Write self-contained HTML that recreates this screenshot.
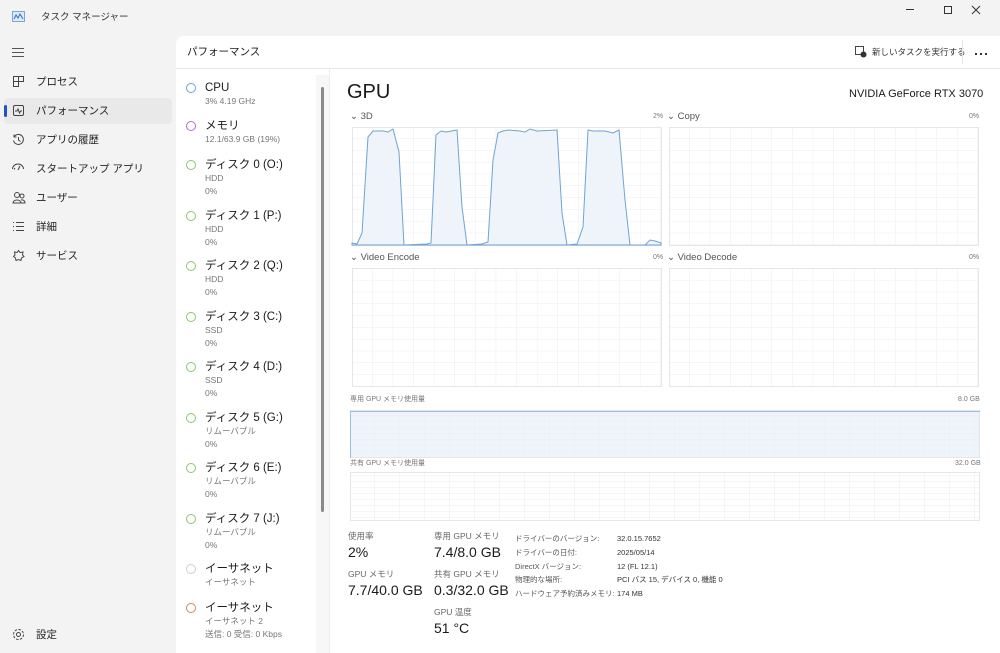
<!DOCTYPE html>
<html><head><meta charset="utf-8"><style>
*{margin:0;padding:0;box-sizing:border-box}
body{width:1000px;height:653px;background:#f3f3f3;font-family:"Liberation Sans","Noto Sans CJK JP",sans-serif;color:#1a1a1a;position:relative;overflow:hidden}
.a{position:absolute;white-space:nowrap;line-height:1.2}
.nav{font-size:10.5px;color:#222}
.it .t{font-size:11.5px;color:#1a1a1a;line-height:14px}
.it .s{font-size:8.5px;color:#777;line-height:12.5px}
.dot{position:absolute;width:10px;height:10px;border-radius:50%;border:1.3px solid}
.lbl{font-size:9.5px;color:#555}
.pc{font-size:7px;color:#777}
.st{font-size:8.5px;color:#666}
.sv{font-size:14px;color:#1a1a1a}
.dl{font-size:7.5px;color:#555}
</style></head><body>
<svg class="a" style="left:12px;top:11px" width="13" height="11"><rect x="0.5" y="0.5" width="12" height="10" fill="#dde9f7" stroke="#7aa7d9"/><path d="M2 8 L4 4 L6 7 L8 3 L11 8" stroke="#2b6fc2" fill="none"/></svg>
<div class="a" style="left:41px;top:12px;font-size:9.5px;color:#333">タスク マネージャー</div>
<div class="a" style="left:906px;top:9px;width:8px;height:1px;background:#333"></div>
<div class="a" style="left:944px;top:6px;width:8px;height:8px;border:1px solid #333"></div>
<svg class="a" style="left:971px;top:5px" width="10" height="10"><path d="M1 1L9 9M9 1L1 9" stroke="#333"/></svg>
<div class="a" style="left:12px;top:48px;width:12px;height:9px;border-top:1px solid #555;border-bottom:1px solid #555"><div style="margin-top:3px;border-top:1px solid #555"></div></div>
<div class="a" style="left:4px;top:98px;width:168px;height:26px;background:#e9e9e9;border-radius:4px"></div>
<div class="a" style="left:4px;top:105px;width:3px;height:12px;background:#1f55c2;border-radius:2px"></div>
<svg class="a" style="left:12px;top:75px" width="13" height="13"><path d="M1.5 1.5H11.5V6.5H6.5V11.5H1.5ZM6.5 1.5V6.5M1.5 6.5H6.5" stroke="#444" fill="none"/></svg>
<div class="a nav" style="left:36px;top:76px">プロセス</div>
<svg class="a" style="left:12px;top:104px" width="13" height="13"><rect x="1.5" y="1.5" width="10" height="10" rx="1.5" stroke="#444" fill="none"/><path d="M3 7H5L6 5L7.5 9L8.5 7H10" stroke="#444" fill="none"/></svg>
<div class="a nav" style="left:36px;top:105px">パフォーマンス</div>
<svg class="a" style="left:12px;top:133px" width="13" height="13"><path d="M2 4A5 5 0 1 1 1.5 7.5M2 1.5V4H4.5M6.5 4V7L8.5 8.5" stroke="#444" fill="none"/></svg>
<div class="a nav" style="left:36px;top:134px">アプリの履歴</div>
<svg class="a" style="left:11px;top:163px" width="14" height="12"><path d="M1.5 6A5.5 5 0 0 1 12.5 6M7 7L9 3M3 6.5L4 5" stroke="#444" fill="none"/></svg>
<div class="a nav" style="left:36px;top:163px">スタートアップ アプリ</div>
<svg class="a" style="left:12px;top:191px" width="14" height="13"><circle cx="5" cy="4" r="2.5" stroke="#444" fill="none"/><circle cx="10" cy="5" r="2" stroke="#444" fill="none"/><path d="M1 12C1 8 9 8 9 12ZM9 9C11 8.5 13 9.5 13 12H9" stroke="#444" fill="none"/></svg>
<div class="a nav" style="left:36px;top:192px">ユーザー</div>
<svg class="a" style="left:12px;top:221px" width="13" height="11"><path d="M1 1.5H2M4 1.5H12M1 5.5H2M4 5.5H12M1 9.5H2M4 9.5H12" stroke="#444"/></svg>
<div class="a nav" style="left:36px;top:221px">詳細</div>
<svg class="a" style="left:12px;top:249px" width="13" height="13"><path d="M6.5 1.5L8 3.5L11 3L10.5 6L12 7.5L9.5 9L9 11.5L6.5 10.5L4 11.5L3.5 9L1.5 7.5L3 6L2.5 3L5 3.5Z" stroke="#444" fill="none"/></svg>
<div class="a nav" style="left:36px;top:250px">サービス</div>
<svg class="a" style="left:12px;top:628px" width="13" height="13"><circle cx="6.5" cy="6.5" r="2" stroke="#444" fill="none"/><circle cx="6.5" cy="6.5" r="5" stroke="#444" fill="none" stroke-dasharray="2.5 1.4"/></svg>
<div class="a nav" style="left:36px;top:629px">設定</div>
<div class="a" style="left:176px;top:36px;width:824px;height:617px;background:#fff;border-top-left-radius:8px"></div>
<div class="a" style="left:176px;top:68px;width:824px;height:1px;background:#e8e8e8"></div>
<div class="a" style="left:187px;top:46px;font-size:10.5px;color:#1a1a1a">パフォーマンス</div>
<svg class="a" style="left:855px;top:46px" width="12" height="12"><rect x="0.5" y="0.5" width="8" height="8" stroke="#444" fill="none"/><circle cx="8.5" cy="8.5" r="3" fill="#333"/></svg>
<div class="a" style="left:872px;top:47px;font-size:8.5px;color:#333">新しいタスクを実行する</div>
<div class="a" style="left:962px;top:40px;width:1px;height:24px;background:#e5e5e5"></div>
<div class="a" style="left:975px;top:53px;width:2px;height:2px;background:#333;box-shadow:5px 0 #333,10px 0 #333"></div>
<div class="a" style="left:316px;top:75px;width:13px;height:578px;background:#f7f7f7"></div>
<div class="a" style="left:321px;top:87px;width:3px;height:425px;background:#8a8a8a;border-radius:2px"></div>
<div class="a" style="left:329px;top:69px;width:1px;height:584px;background:#ececec"></div>
<div class="it">
<div class="dot" style="left:186px;top:83px;border-color:#6aa4d6"></div><div class="a t" style="left:205px;top:81px">CPU</div><div class="a s" style="left:205px;top:95px">3% 4.19 GHz</div>
<div class="dot" style="left:186px;top:121px;border-color:#b76ad0"></div><div class="a t" style="left:205px;top:119px">メモリ</div><div class="a s" style="left:205px;top:133px">12.1/63.9 GB (19%)</div>
<div class="dot" style="left:186px;top:160px;border-color:#8cc66a"></div><div class="a t" style="left:205px;top:158px">ディスク 0 (O:)</div><div class="a s" style="left:205px;top:172px">HDD<br>0%</div>
<div class="dot" style="left:186px;top:211px;border-color:#8cc66a"></div><div class="a t" style="left:205px;top:209px">ディスク 1 (P:)</div><div class="a s" style="left:205px;top:223px">HDD<br>0%</div>
<div class="dot" style="left:186px;top:261px;border-color:#8cc66a"></div><div class="a t" style="left:205px;top:259px">ディスク 2 (Q:)</div><div class="a s" style="left:205px;top:273px">HDD<br>0%</div>
<div class="dot" style="left:186px;top:312px;border-color:#8cc66a"></div><div class="a t" style="left:205px;top:310px">ディスク 3 (C:)</div><div class="a s" style="left:205px;top:324px">SSD<br>0%</div>
<div class="dot" style="left:186px;top:362px;border-color:#8cc66a"></div><div class="a t" style="left:205px;top:360px">ディスク 4 (D:)</div><div class="a s" style="left:205px;top:374px">SSD<br>0%</div>
<div class="dot" style="left:186px;top:413px;border-color:#8cc66a"></div><div class="a t" style="left:205px;top:411px">ディスク 5 (G:)</div><div class="a s" style="left:205px;top:425px">リムーバブル<br>0%</div>
<div class="dot" style="left:186px;top:463px;border-color:#8cc66a"></div><div class="a t" style="left:205px;top:461px">ディスク 6 (E:)</div><div class="a s" style="left:205px;top:475px">リムーバブル<br>0%</div>
<div class="dot" style="left:186px;top:514px;border-color:#8cc66a"></div><div class="a t" style="left:205px;top:512px">ディスク 7 (J:)</div><div class="a s" style="left:205px;top:526px">リムーバブル<br>0%</div>
<div class="dot" style="left:186px;top:564px;border-color:#cfcfcf"></div><div class="a t" style="left:205px;top:562px">イーサネット</div><div class="a s" style="left:205px;top:576px">イーサネット</div>
<div class="dot" style="left:186px;top:603px;border-color:#d08a55"></div><div class="a t" style="left:205px;top:601px">イーサネット</div><div class="a s" style="left:205px;top:615px">イーサネット 2<br>送信: 0 受信: 0 Kbps</div>
</div>
<div class="a" style="left:347px;top:80px;font-size:20px;color:#1a1a1a">GPU</div>
<div class="a" style="left:849px;top:88px;font-size:11px;color:#1a1a1a">NVIDIA GeForce RTX 3070</div>
<div class="a lbl" style="left:350px;top:111px">⌄ 3D</div><div class="a pc" style="left:653px;top:113px">2%</div>
<div class="a lbl" style="left:667px;top:111px">⌄ Copy</div><div class="a pc" style="left:969px;top:113px">0%</div>
<div class="a lbl" style="left:350px;top:252px">⌄ Video Encode</div><div class="a pc" style="left:653px;top:254px">0%</div>
<div class="a lbl" style="left:667px;top:252px">⌄ Video Decode</div><div class="a pc" style="left:969px;top:254px">0%</div>
<div class="a pc" style="left:350px;top:396px">専用 GPU メモリ使用量</div><div class="a pc" style="left:958px;top:396px">8.0 GB</div>
<div class="a pc" style="left:350px;top:460px">共有 GPU メモリ使用量</div><div class="a pc" style="left:955px;top:460px">32.0 GB</div>
<svg class="a" style="left:0;top:0" width="1000" height="653">
<defs>
<pattern id="g" x="352" y="127" width="20.6" height="11.8" patternUnits="userSpaceOnUse"><path d="M20.6 0V11.8M0 11.8H20.6" stroke="#ececec" stroke-width="1" fill="none"/></pattern>
<pattern id="g2" x="669" y="127" width="20.6" height="11.8" patternUnits="userSpaceOnUse"><path d="M20.6 0V11.8M0 11.8H20.6" stroke="#ececec" stroke-width="1" fill="none"/></pattern>
<pattern id="g3" x="350" y="410" width="25" height="6" patternUnits="userSpaceOnUse"><path d="M25 0V6M0 6H25" stroke="#ececec" stroke-width="1" fill="none"/></pattern>
</defs>
<rect x="352.5" y="127.5" width="309" height="118" fill="url(#g)" stroke="#e6e6e6"/>
<rect x="669.5" y="127.5" width="309" height="118" fill="url(#g2)" stroke="#e6e6e6"/>
<rect x="352.5" y="268.5" width="309" height="118" fill="url(#g)" stroke="#e6e6e6"/>
<rect x="669.5" y="268.5" width="309" height="118" fill="url(#g2)" stroke="#e6e6e6"/>
<rect x="350.5" y="410.5" width="629" height="47" fill="#eef4fb"/>
<rect x="350.5" y="410.5" width="629" height="47" fill="url(#g3)" stroke="#e6e6e6"/>
<path d="M350.5 458V411.5H980" stroke="#9bbde0" fill="none"/>
<rect x="350.5" y="472.5" width="629" height="48" fill="url(#g3)" stroke="#e6e6e6"/>
<path d="M352 243L357 244L362 233L368 137L373 131L383 131L388 132L393 129L399 152L404 245L427 244L431 243L436 135L441 131L446 132L457 130L462 207L467 245L482 244L488 242L493 160L498 133L503 131L509 130L520 131L525 132L530 129L537 131L557 130L562 213L567 245L577 244L583 227L588 130L593 131L605 131L613 133L619 130L625 200L630 245L645 245L650 240L655 241L661 243V245H352Z" fill="#eef4fa" stroke="#6fa3d4" stroke-width="1"/>
</svg>
<div class="a st" style="left:348px;top:531px">使用率</div><div class="a sv" style="left:348px;top:544px">2%</div>
<div class="a st" style="left:348px;top:569px">GPU メモリ</div><div class="a sv" style="left:348px;top:582px">7.7/40.0 GB</div>
<div class="a st" style="left:434px;top:531px">専用 GPU メモリ</div><div class="a sv" style="left:434px;top:544px">7.4/8.0 GB</div>
<div class="a st" style="left:434px;top:569px">共有 GPU メモリ</div><div class="a sv" style="left:434px;top:582px">0.3/32.0 GB</div>
<div class="a st" style="left:434px;top:607px">GPU 温度</div><div class="a sv" style="left:434px;top:620px">51 °C</div>
<div class="a dl" style="left:515px;top:532px;line-height:13.8px">ドライバーのバージョン:<br>ドライバーの日付:<br>DirectX バージョン:<br>物理的な場所:<br>ハードウェア予約済みメモリ:</div>
<div class="a dl" style="left:617px;top:532px;line-height:13.8px;color:#333">32.0.15.7652<br>2025/05/14<br>12 (FL 12.1)<br>PCI バス 15, デバイス 0, 機能 0<br>174 MB</div>
</body></html>
